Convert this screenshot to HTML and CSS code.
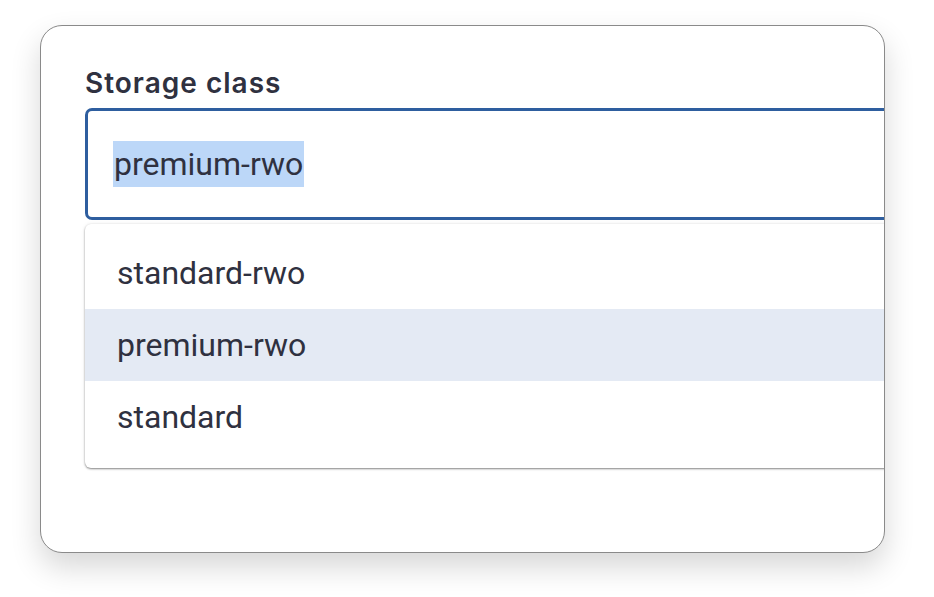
FILE: index.html
```html
<!DOCTYPE html>
<html lang="en">
<head>
<meta charset="utf-8">
<title>Storage class</title>
<link rel="stylesheet" href="styles.css">
</head>
<body>
<div class="card">
  <div class="label">Storage class</div>
  <div class="input"><span class="selected">premium-rwo</span></div>
  <ul class="menu">
    <li class="item">standard-rwo</li>
    <li class="item active">premium-rwo</li>
    <li class="item">standard</li>
  </ul>
</div>
</body>
</html>
```
FILE: styles.css
```css
html, body {
  margin: 0;
  padding: 0;
  background: #ffffff;
}
body {
  padding: 25px 0 0 40px;
  min-height: 597px;
  box-sizing: border-box;
}
.card {
  width: 799px;
  height: 526px;
  border: 1px solid #8a8a8a;
  border-radius: 22px;
  background: #fff;
  overflow: hidden;
  box-shadow: 0 14px 30px rgba(0, 0, 0, 0.16);
  padding: 0 0 0 44px;
  box-sizing: content-box;
}
.label {
  font-family: "Inter", "Lato", sans-serif;
  font-weight: 600;
  font-size: 28px;
  line-height: 34px;
  letter-spacing: 1px;
  color: #2f3140;
  margin-top: 40px;
}
.input {
  width: 900px;
  height: 106px;
  margin-top: 8px;
  border: 3px solid #2e5e9f;
  border-radius: 7px;
  display: flex;
  align-items: center;
  padding-left: 25px;
  box-sizing: content-box;
  font-family: "Roboto", sans-serif;
  font-size: 32px;
  color: #2f3140;
}
.selected {
  background: #bcd7f8;
  line-height: 46px;
  display: inline-block;
  padding: 0 1px;
}
.menu {
  list-style: none;
  margin: 4px 0 0 0;
  padding: 13px 0 15px 0;
  width: 928px;
  background: #fff;
  border-radius: 6px;
  box-shadow: 0 1px 2px rgba(0, 0, 0, 0.45), 0 0 4px rgba(0, 0, 0, 0.08);
}
.item {
  height: 72px;
  display: flex;
  align-items: center;
  padding-left: 32px;
  font-family: "Roboto", sans-serif;
  font-size: 32px;
  color: #2f3140;
}
.item.active {
  background: #e4eaf4;
}
```
